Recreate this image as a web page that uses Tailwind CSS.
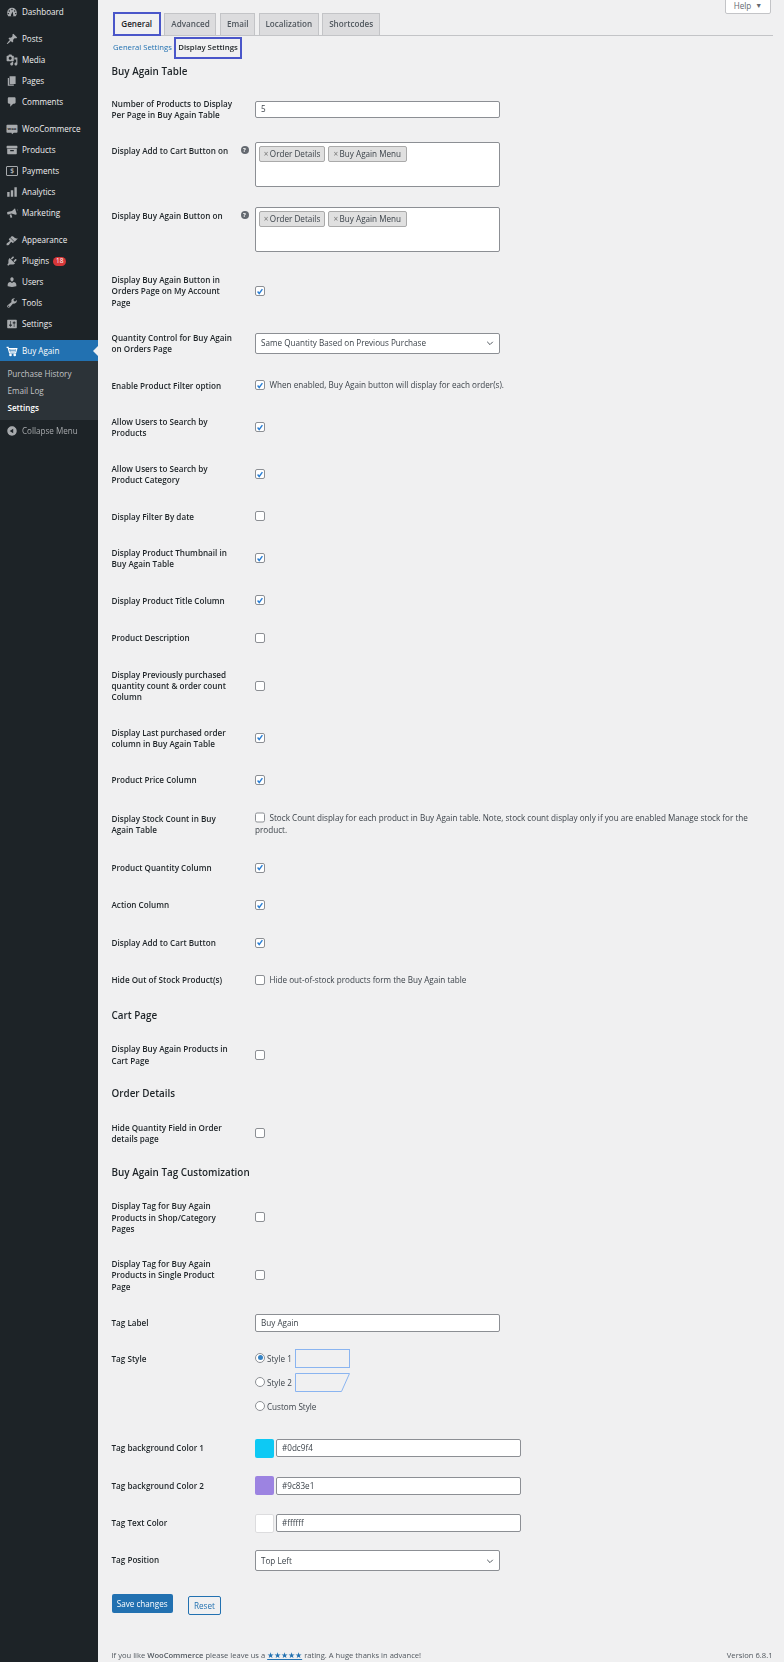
<!DOCTYPE html>
<html lang="en">
  <head>
    <meta charset="UTF-8" />
    <meta name="viewport" content="width=device-width, initial-scale=1.0" />
    <title>Buy Again Settings</title>
    <script src="https://cdn.jsdelivr.net/npm/@tailwindcss/browser@4"></script>
  </head>
  <body class="bg-[#f0f0f1]">
    <div class="relative flex h-[1662px] w-[784px] overflow-hidden font-['Open_Sans',sans-serif] text-[8.15px] text-[#3c434a] blur-[0.3px]">
      <!-- admin menu -->
      <aside class="w-[98px] shrink-0 bg-[#1d2327] pt-[1.3px] text-[8.1px] text-[#f0f0f1]">
        <nav class="flex flex-col">
          <a class="flex h-[20.9px] items-center gap-[4px] pl-[6px]"><svg class="size-[12px] fill-[#a7aaad]" viewBox="0 0 20 20"><path fill-rule="evenodd" d="M3.76 17h12.48A8 8 0 0 0 18 11 8 8 0 1 0 2 11a8 8 0 0 0 1.76 6zM10 4.5a1.2 1.2 0 1 1 0 2.4 1.2 1.2 0 0 1 0-2.4zM5.5 7a1.2 1.2 0 1 1 0 2.4A1.2 1.2 0 0 1 5.5 7zm9 0a1.2 1.2 0 1 1 0 2.4 1.2 1.2 0 0 1 0-2.4zM4 11.5a1.2 1.2 0 1 1 0 2.4 1.2 1.2 0 0 1 0-2.4zm12 0a1.2 1.2 0 1 1 0 2.4 1.2 1.2 0 0 1 0-2.4zM11 9l1 5.5a2 2 0 1 1-3.6 0z"/></svg>Dashboard</a>
          <a class="mt-[6.4px] flex h-[20.9px] items-center gap-[4px] pl-[6px]"><svg class="size-[12px] fill-[#a7aaad]" viewBox="0 0 20 20"><path d="M10.44 3.02l1.82-1.82 6.36 6.35-1.83 1.82c-1.05-.68-2.48-.57-3.41.36l-.75.75c-.92.93-1.04 2.35-.35 3.41l-1.83 1.82-2.41-2.41-2.8 2.79c-.42.42-3.38 2.71-3.8 2.29s1.86-3.39 2.28-3.81l2.79-2.79L4.1 9.36l1.83-1.82c1.05.69 2.48.57 3.4-.36l.75-.75c.93-.92 1.05-2.35.36-3.41z"/></svg>Posts</a>
          <a class="flex h-[20.9px] items-center gap-[4px] pl-[6px]"><svg class="size-[12px] fill-[#a7aaad]" viewBox="0 0 20 20"><path d="M13 11V4c0-.55-.45-1-1-1h-1.67L9 1H5L3.67 3H2c-.55 0-1 .45-1 1v7c0 .55.45 1 1 1h10c.55 0 1-.45 1-1zM7 4.5c1.38 0 2.5 1.12 2.5 2.5S8.38 9.5 7 9.5 4.5 8.38 4.5 7 5.62 4.5 7 4.5zM14 6h5v10.5c0 1.38-1.12 2.5-2.5 2.5S14 17.88 14 16.5s1.12-2.5 2.5-2.5c.17 0 .34.02.5.05V9h-3V6zm-4 8.05V13h2v3.5c0 1.38-1.12 2.5-2.5 2.5S7 17.88 7 16.5 8.12 14 9.5 14c.17 0 .34.02.5.05z"/></svg>Media</a>
          <a class="flex h-[20.9px] items-center gap-[4px] pl-[6px]"><svg class="size-[12px] fill-[#a7aaad]" viewBox="0 0 20 20"><path d="M6 15V2h10v13H6zm-1 1h8v2H3V5h2v11z"/></svg>Pages</a>
          <a class="flex h-[20.9px] items-center gap-[4px] pl-[6px]"><svg class="size-[12px] fill-[#a7aaad]" viewBox="0 0 20 20"><path d="M5 2h9c1.1 0 2 .9 2 2v7c0 1.1-.9 2-2 2h-2l-5 5v-5H5c-1.1 0-2-.9-2-2V4c0-1.1.9-2 2-2z"/></svg>Comments</a>
          <a class="mt-[6.9px] flex h-[20.9px] items-center gap-[4px] pl-[6px]"><svg class="size-[12px] fill-[#a7aaad]" viewBox="0 0 20 20"><path d="M2 3h16c.8 0 1.2.5 1.2 1.200v11c0 .7-.5 1.200-1.200 1.200h-5l-3 2.300-.8-2.300H2c-.7 0-1.200-.5-1.200-1.200v-11C.8 3.500 1.300 3 2 3z"/><text x="10" y="12" text-anchor="middle" font-size="7" font-weight="700" fill="#1d2327">woo</text></svg>WooCommerce</a>
          <a class="flex h-[20.9px] items-center gap-[4px] pl-[6px]"><svg class="size-[12px] fill-[#a7aaad]" viewBox="0 0 20 20"><path d="M19 4v3H1V4c0-.55.45-1 1-1h16c.55 0 1 .45 1 1zM2 8h16v8c0 .55-.45 1-1 1H3c-.55 0-1-.45-1-1V8zm5 2v2h6v-2H7z"/></svg>Products</a>
          <a class="flex h-[20.9px] items-center gap-[4px] pl-[6px]"><span class="flex h-[10px] w-[12px] items-center justify-center rounded-[1px] border border-[#a7aaad] text-[6.5px] leading-none font-bold text-[#a7aaad]">$</span>Payments</a>
          <a class="flex h-[20.9px] items-center gap-[4px] pl-[6px]"><svg class="size-[12px] fill-[#a7aaad]" viewBox="0 0 20 20"><path d="M18 18V2h-4v16h4zm-6 0V7H8v11h4zm-6 0v-8H2v8h4z"/></svg>Analytics</a>
          <a class="flex h-[20.9px] items-center gap-[4px] pl-[6px]"><svg class="size-[12px] fill-[#a7aaad]" viewBox="0 0 20 20"><path d="M15 2l3 10-2 .8-7-1.800-5 1.500-2-.5v-3.500l2-.7 6-1.300zM18.500 5l1.300-.8.2 1-1.200.6zM6 13l2.800-.8 1.700 5-2.700 1z"/></svg>Marketing</a>
          <a class="mt-[6.6px] flex h-[20.9px] items-center gap-[4px] pl-[6px]"><svg class="size-[12px] fill-[#a7aaad]" viewBox="0 0 20 20"><path d="M14.480 11.060L7.410 3.990l1.500-1.500c.5-.56 2.300-.47 3.510.32 1.210.8 1.430 1.280 2.910 2.100 1.180.64 2.450 1.260 4.450.85zm-.71.71L6.700 4.700 4.930 6.470c-.39.39-.39 1.020 0 1.410l1.060 1.060c.39.39.39 1.030 0 1.420-.6.6-1.430 1.110-2.210 1.690-.35.26-.7.53-1.010.84C1.430 13.230.4 14.700 1.100 16.900c2.200.7 3.670-.33 4.530-1.670.31-.31.58-.66.84-1.010.58-.78 1.090-1.610 1.690-2.210.39-.39 1.030-.39 1.420 0l1.060 1.060c.39.39 1.020.39 1.410 0z"/></svg>Appearance</a>
          <a class="flex h-[20.9px] items-center gap-[4px] pl-[6px]"><svg class="size-[12px] fill-[#a7aaad]" viewBox="0 0 20 20"><path d="M13.110 4.360L9.870 7.600 8 5.730l3.240-3.240c.35-.34 1.050-.2 1.560.32.52.51.66 1.210.31 1.550zm-8 1.770l.91-1.120 9.010 9.010-1.190.84c-.71.71-2.630 1.160-3.820 1.160H6.140L4.900 17.260c-.59.59-1.540.59-2.120 0-.59-.58-.59-1.530 0-2.120l1.240-1.240v-3.880c0-1.130.4-3.190 1.090-3.890zm7.260 3.970l3.240-3.240c.34-.35 1.040-.21 1.550.31.52.51.66 1.210.31 1.550l-3.240 3.250z"/></svg>Plugins<span class="flex h-[9.500px] w-[13px] items-center justify-center rounded-full bg-[#d63638] text-[6.500px] leading-none text-white">18</span></a>
          <a class="flex h-[20.9px] items-center gap-[4px] pl-[6px]"><svg class="size-[12px] fill-[#a7aaad]" viewBox="0 0 20 20"><path d="M10 9.250c-2.270 0-2.730-3.440-2.730-3.440C7 4.020 7.820 2 9.970 2c2.160 0 2.980 2.020 2.710 3.810 0 0-.41 3.440-2.680 3.440zm0 2.570L12.720 10c2.390 0 4.520 2.330 4.520 4.530v2.490s-3.650 1.130-7.240 1.130c-3.650 0-7.240-1.130-7.240-1.130v-2.490c0-2.250 1.940-4.480 4.470-4.480z"/></svg>Users</a>
          <a class="flex h-[20.9px] items-center gap-[4px] pl-[6px]"><svg class="size-[12px] fill-[#a7aaad]" viewBox="0 0 20 20"><path d="M16.680 9.770c-1.340 1.340-3.300 1.670-4.950.99l-5.410 6.520c-.99.99-2.590.99-3.580 0s-.99-2.590 0-3.570l6.520-5.420c-.68-1.650-.35-3.610.99-4.950 1.280-1.280 3.120-1.620 4.720-1.060l-2.890 2.890 2.820 2.820 2.860-2.870c.53 1.580.18 3.390-1.080 4.650zM3.810 16.210c.4.39 1.040.39 1.430 0 .4-.4.4-1.040 0-1.430-.39-.4-1.030-.4-1.430 0-.39.39-.39 1.030 0 1.430z"/></svg>Tools</a>
          <a class="flex h-[20.9px] items-center gap-[4px] pl-[6px]"><svg class="size-[12px] fill-[#a7aaad]" viewBox="0 0 20 20"><path d="M18 16V4c0-.55-.45-1-1-1H3c-.55 0-1 .45-1 1v12c0 .55.45 1 1 1h14c.55 0 1-.45 1-1zM8 11h1c.55 0 1 .45 1 1s-.45 1-1 1H8v1.500c0 .28-.22.5-.5.5s-.5-.22-.5-.5V13H6c-.55 0-1-.45-1-1s.45-1 1-1h1V5.500c0-.28.22-.5.5-.5s.5.22.5.5V11zm5-2h-1c-.55 0-1-.45-1-1s.45-1 1-1h1V5.500c0-.28.22-.5.5-.5s.5.22.5.5V7h1c.55 0 1 .45 1 1s-.45 1-1 1h-1v5.500c0 .28-.22.5-.5.5s-.5-.22-.5-.5V9z"/></svg>Settings</a>
          <a class="relative mt-[5.700px] flex h-[21px] items-center gap-[4px] bg-[#2271b1] pl-[6px] text-white"><svg class="size-[12px] fill-none stroke-white stroke-2" viewBox="0 0 20 20"><path d="M1 4h2.500l2.500 9h10l2-7H5"/><path d="M7 8h9M7 10.500h8" stroke-width="1.500"/><circle cx="7.500" cy="16.500" r="1.200" fill="#fff"/><circle cx="14.500" cy="16.500" r="1.200" fill="#fff"/></svg>Buy Again<span class="absolute top-[5.500px] right-0 size-0 border-y-[5px] border-r-[5px] border-y-transparent border-r-[#f0f0f1]"></span></a>
          <div class="flex h-[59px] flex-col justify-center gap-[5.800px] bg-[#2c3338] pl-[7.500px] text-[#c3c4c7]">
            <a class="leading-[11.300px]">Purchase History</a>
            <a class="leading-[11.300px]">Email Log</a>
            <a class="leading-[11.300px] font-semibold text-white">Settings</a>
          </div>
          <a class="flex h-[21.500px] items-center gap-[4px] pl-[6px] text-[#a7aaad]"><svg class="size-[12px] fill-[#a7aaad]" viewBox="0 0 20 20"><path d="M10 2.160c4.330 0 7.840 3.510 7.840 7.840s-3.510 7.840-7.840 7.840S2.160 14.330 2.160 10 5.710 2.160 10 2.160zm2 11.720V6.120L6.180 9.970z"/></svg>Collapse Menu</a>
        </nav>
      </aside>

      <main class="flex w-[686px] flex-col pl-[13.500px]">
        <!-- tabs -->
        <div class="mt-[12px] flex h-[23.500px] w-[661px] items-end gap-[3.800px] border-b border-[#c3c4c7] pl-[1.200px]">
          <a class="flex h-[24px] w-[48px] translate-y-[1px] items-center justify-center border-2 border-[#4a56c9] bg-[#f0f0f1] pt-[1px] font-semibold text-[#1d2327]">General</a>
          <a class="flex h-[22px] w-[52px] items-center justify-center border border-b-0 border-[#c3c4c7] bg-[#dcdcde] pt-[1px] font-semibold text-[#50575e]">Advanced</a>
          <a class="flex h-[22px] w-[35px] items-center justify-center border border-b-0 border-[#c3c4c7] bg-[#dcdcde] pt-[1px] font-semibold text-[#50575e]">Email</a>
          <a class="flex h-[22px] w-[59.500px] items-center justify-center border border-b-0 border-[#c3c4c7] bg-[#dcdcde] pt-[1px] font-semibold text-[#50575e]">Localization</a>
          <a class="flex h-[22px] w-[57.500px] items-center justify-center border border-b-0 border-[#c3c4c7] bg-[#dcdcde] pt-[1px] font-semibold text-[#50575e]">Shortcodes</a>
        </div>
        <!-- sub tabs -->
        <div class="mt-[1.500px] flex h-[22px] items-center pl-[1.500px]">
          <a class="w-[59px] text-[7.700px] whitespace-nowrap text-[#2271b1]">General Settings</a>
          <span class="w-[2px] text-[#a7aaad]">|</span>
          <a class="flex h-[22px] w-[68px] items-center justify-center border-2 border-[#4a56c9] text-[7.800px] font-semibold text-[#1d2327]">Display Settings</a>
        </div>
        <h2 class="mt-[5px] text-[9.900px] leading-[15px] font-semibold text-[#1d2327]">Buy Again Table</h2>

        <div class="mt-[7px] flex flex-col">
          <div class="flex min-h-[37.500px] items-center">
            <div class="w-[143.500px] py-[12.150px]"><p class="w-[124px] leading-[11.200px] font-semibold text-[#1d2327]">Number of Products to Display Per Page in Buy Again Table</p></div>
            <div class="flex h-[17px] w-[245px] items-center rounded-[2px] border border-[#8c8f94] bg-white px-[5px]">5</div>
          </div>
          <div class="flex h-[64.700px] items-start pt-[9.200px]">
            <div class="flex w-[143.500px] items-center pt-[3px]"><p class="w-[129px] leading-[11.200px] font-semibold text-[#1d2327]">Display Add to Cart Button on</p><span class="flex size-[8px] items-center justify-center rounded-full bg-[#646970] text-[6px] leading-none font-bold text-white">?</span></div>
            <div class="flex h-[45px] w-[245px] items-start gap-[3px] rounded-[2px] border border-[#8c8f94] bg-white p-[3px]">
              <span class="flex h-[16.500px] w-[66px] items-center justify-center rounded-[2px] border border-[#aaaaaa] bg-[#e0e0e0]"><span class="mr-[1.500px] text-[#777777]">×</span>Order Details</span>
              <span class="flex h-[16.500px] w-[78.500px] items-center justify-center rounded-[2px] border border-[#aaaaaa] bg-[#e0e0e0]"><span class="mr-[1.500px] text-[#777777]">×</span>Buy Again Menu</span>
            </div>
          </div>
          <div class="flex h-[64.700px] items-start pt-[9.200px]">
            <div class="flex w-[143.500px] items-center pt-[3px]"><p class="w-[129px] leading-[11.200px] font-semibold text-[#1d2327]">Display Buy Again Button on</p><span class="flex size-[8px] items-center justify-center rounded-full bg-[#646970] text-[6px] leading-none font-bold text-white">?</span></div>
            <div class="flex h-[45px] w-[245px] items-start gap-[3px] rounded-[2px] border border-[#8c8f94] bg-white p-[3px]">
              <span class="flex h-[16.500px] w-[66px] items-center justify-center rounded-[2px] border border-[#aaaaaa] bg-[#e0e0e0]"><span class="mr-[1.500px] text-[#777777]">×</span>Order Details</span>
              <span class="flex h-[16.500px] w-[78.500px] items-center justify-center rounded-[2px] border border-[#aaaaaa] bg-[#e0e0e0]"><span class="mr-[1.500px] text-[#777777]">×</span>Buy Again Menu</span>
            </div>
          </div>
          <div class="flex min-h-[37.500px] items-center">
            <div class="w-[143.500px] py-[12.150px]"><p class="w-[124px] leading-[11.200px] font-semibold text-[#1d2327]">Display Buy Again Button in Orders Page on My Account Page</p></div>
            <span class="flex size-[10px] items-center justify-center rounded-[2px] border border-[#8c8f94] bg-white"><svg class="size-[9px] fill-none stroke-[#2b7fd4] stroke-[3.500]" viewBox="0 0 20 20"><path d="M4 10l4 5 8-11"/></svg></span>
          </div>
          <div class="flex min-h-[37.500px] items-center">
            <div class="w-[143.500px] py-[12.150px]"><p class="w-[124px] leading-[11.200px] font-semibold text-[#1d2327]">Quantity Control for Buy Again on Orders Page</p></div>
            <div class="flex h-[20.500px] w-[245px] items-center justify-between rounded-[2px] border border-[#8c8f94] bg-white px-[5px]">Same Quantity Based on Previous Purchase<svg class="size-[8px] fill-none stroke-[#50575e] stroke-[2.500]" viewBox="0 0 20 20"><path d="M3 7l7 7 7-7"/></svg></div>
          </div>
          <div class="flex min-h-[37.500px] items-center">
            <div class="w-[143.500px] py-[12.150px]"><p class="w-[124px] leading-[11.200px] font-semibold text-[#1d2327]">Enable Product Filter option</p></div>
            <span class="flex size-[10px] items-center justify-center rounded-[2px] border border-[#8c8f94] bg-white"><svg class="size-[9px] fill-none stroke-[#2b7fd4] stroke-[3.500]" viewBox="0 0 20 20"><path d="M4 10l4 5 8-11"/></svg></span>
            <span class="ml-[4.500px]">When enabled, Buy Again button will display for each order(s).</span>
          </div>
          <div class="flex min-h-[37.500px] items-center">
            <div class="w-[143.500px] py-[12.150px]"><p class="w-[124px] leading-[11.200px] font-semibold text-[#1d2327]">Allow Users to Search by Products</p></div>
            <span class="flex size-[10px] items-center justify-center rounded-[2px] border border-[#8c8f94] bg-white"><svg class="size-[9px] fill-none stroke-[#2b7fd4] stroke-[3.500]" viewBox="0 0 20 20"><path d="M4 10l4 5 8-11"/></svg></span>
          </div>
          <div class="flex min-h-[37.500px] items-center">
            <div class="w-[143.500px] py-[12.150px]"><p class="w-[124px] leading-[11.200px] font-semibold text-[#1d2327]">Allow Users to Search by Product Category</p></div>
            <span class="flex size-[10px] items-center justify-center rounded-[2px] border border-[#8c8f94] bg-white"><svg class="size-[9px] fill-none stroke-[#2b7fd4] stroke-[3.500]" viewBox="0 0 20 20"><path d="M4 10l4 5 8-11"/></svg></span>
          </div>
          <div class="flex min-h-[37.500px] items-center">
            <div class="w-[143.500px] py-[12.150px]"><p class="w-[124px] leading-[11.200px] font-semibold text-[#1d2327]">Display Filter By date</p></div>
            <span class="size-[10px] rounded-[2px] border border-[#8c8f94] bg-white"></span>
          </div>
          <div class="flex min-h-[37.500px] items-center">
            <div class="w-[143.500px] py-[12.150px]"><p class="w-[124px] leading-[11.200px] font-semibold text-[#1d2327]">Display Product Thumbnail in Buy Again Table</p></div>
            <span class="flex size-[10px] items-center justify-center rounded-[2px] border border-[#8c8f94] bg-white"><svg class="size-[9px] fill-none stroke-[#2b7fd4] stroke-[3.500]" viewBox="0 0 20 20"><path d="M4 10l4 5 8-11"/></svg></span>
          </div>
          <div class="flex min-h-[37.500px] items-center">
            <div class="w-[143.500px] py-[12.150px]"><p class="w-[124px] leading-[11.200px] font-semibold text-[#1d2327]">Display Product Title Column</p></div>
            <span class="flex size-[10px] items-center justify-center rounded-[2px] border border-[#8c8f94] bg-white"><svg class="size-[9px] fill-none stroke-[#2b7fd4] stroke-[3.500]" viewBox="0 0 20 20"><path d="M4 10l4 5 8-11"/></svg></span>
          </div>
          <div class="flex min-h-[37.500px] items-center">
            <div class="w-[143.500px] py-[12.150px]"><p class="w-[124px] leading-[11.200px] font-semibold text-[#1d2327]">Product Description</p></div>
            <span class="size-[10px] rounded-[2px] border border-[#8c8f94] bg-white"></span>
          </div>
          <div class="flex min-h-[37.500px] items-center">
            <div class="w-[143.500px] py-[12.150px]"><p class="w-[124px] leading-[11.200px] font-semibold text-[#1d2327]">Display Previously purchased quantity count &amp; order count Column</p></div>
            <span class="size-[10px] rounded-[2px] border border-[#8c8f94] bg-white"></span>
          </div>
          <div class="flex min-h-[37.500px] items-center">
            <div class="w-[143.500px] py-[12.150px]"><p class="w-[124px] leading-[11.200px] font-semibold text-[#1d2327]">Display Last purchased order column in Buy Again Table</p></div>
            <span class="flex size-[10px] items-center justify-center rounded-[2px] border border-[#8c8f94] bg-white"><svg class="size-[9px] fill-none stroke-[#2b7fd4] stroke-[3.500]" viewBox="0 0 20 20"><path d="M4 10l4 5 8-11"/></svg></span>
          </div>
          <div class="flex min-h-[37.500px] items-center">
            <div class="w-[143.500px] py-[12.150px]"><p class="w-[124px] leading-[11.200px] font-semibold text-[#1d2327]">Product Price Column</p></div>
            <span class="flex size-[10px] items-center justify-center rounded-[2px] border border-[#8c8f94] bg-white"><svg class="size-[9px] fill-none stroke-[#2b7fd4] stroke-[3.500]" viewBox="0 0 20 20"><path d="M4 10l4 5 8-11"/></svg></span>
          </div>
          <div class="flex min-h-[50px] items-center">
            <div class="w-[143.500px] shrink-0 py-[12.150px]"><p class="w-[124px] leading-[11.200px] font-semibold text-[#1d2327]">Display Stock Count in Buy Again Table</p></div>
            <p class="w-[517px] leading-[12px]"><span class="mr-[4.500px] inline-block size-[10px] translate-y-[1.500px] rounded-[2px] border border-[#8c8f94] bg-white"></span>Stock Count display for each product in Buy Again table. Note, stock count display only if you are enabled Manage stock for the product.</p>
          </div>
          <div class="flex min-h-[37.500px] items-center">
            <div class="w-[143.500px] py-[12.150px]"><p class="w-[124px] leading-[11.200px] font-semibold text-[#1d2327]">Product Quantity Column</p></div>
            <span class="flex size-[10px] items-center justify-center rounded-[2px] border border-[#8c8f94] bg-white"><svg class="size-[9px] fill-none stroke-[#2b7fd4] stroke-[3.500]" viewBox="0 0 20 20"><path d="M4 10l4 5 8-11"/></svg></span>
          </div>
          <div class="flex min-h-[37.500px] items-center">
            <div class="w-[143.500px] py-[12.150px]"><p class="w-[124px] leading-[11.200px] font-semibold text-[#1d2327]">Action Column</p></div>
            <span class="flex size-[10px] items-center justify-center rounded-[2px] border border-[#8c8f94] bg-white"><svg class="size-[9px] fill-none stroke-[#2b7fd4] stroke-[3.500]" viewBox="0 0 20 20"><path d="M4 10l4 5 8-11"/></svg></span>
          </div>
          <div class="flex min-h-[37.500px] items-center">
            <div class="w-[143.500px] py-[12.150px]"><p class="w-[124px] leading-[11.200px] font-semibold text-[#1d2327]">Display Add to Cart Button</p></div>
            <span class="flex size-[10px] items-center justify-center rounded-[2px] border border-[#8c8f94] bg-white"><svg class="size-[9px] fill-none stroke-[#2b7fd4] stroke-[3.500]" viewBox="0 0 20 20"><path d="M4 10l4 5 8-11"/></svg></span>
          </div>
          <div class="flex min-h-[37.500px] items-center">
            <div class="w-[143.500px] py-[12.150px]"><p class="w-[124px] leading-[11.200px] font-semibold text-[#1d2327]">Hide Out of Stock Product(s)</p></div>
            <span class="size-[10px] rounded-[2px] border border-[#8c8f94] bg-white"></span>
            <span class="ml-[4.500px]">Hide out-of-stock products form the Buy Again table</span>
          </div>
        </div>

        <h2 class="flex h-[32.500px] items-center text-[9.900px] font-semibold text-[#1d2327]">Cart Page</h2>
        <div class="flex min-h-[37.500px] items-center">
          <div class="w-[143.500px] py-[12.150px]"><p class="w-[124px] leading-[11.200px] font-semibold text-[#1d2327]">Display Buy Again Products in Cart Page</p></div>
          <span class="size-[10px] rounded-[2px] border border-[#8c8f94] bg-white"></span>
        </div>

        <h2 class="flex h-[31.500px] items-center text-[9.900px] font-semibold text-[#1d2327]">Order Details</h2>
        <div class="flex min-h-[37.500px] items-center">
          <div class="w-[143.500px] py-[12.150px]"><p class="w-[124px] leading-[11.200px] font-semibold text-[#1d2327]">Hide Quantity Field in Order details page</p></div>
          <span class="size-[10px] rounded-[2px] border border-[#8c8f94] bg-white"></span>
        </div>

        <h2 class="flex h-[32px] items-center text-[9.900px] font-semibold text-[#1d2327]">Buy Again Tag Customization</h2>
        <div class="flex min-h-[37.500px] items-center">
          <div class="w-[143.500px] py-[12.150px]"><p class="w-[124px] leading-[11.200px] font-semibold text-[#1d2327]">Display Tag for Buy Again Products in Shop/Category Pages</p></div>
          <span class="size-[10px] rounded-[2px] border border-[#8c8f94] bg-white"></span>
        </div>
        <div class="flex min-h-[37.500px] items-center">
          <div class="w-[143.500px] py-[12.150px]"><p class="w-[124px] leading-[11.200px] font-semibold text-[#1d2327]">Display Tag for Buy Again Products in Single Product<br />Page</p></div>
          <span class="size-[10px] rounded-[2px] border border-[#8c8f94] bg-white"></span>
        </div>
        <div class="flex min-h-[37.500px] items-center">
          <div class="w-[143.500px] font-semibold text-[#1d2327]">Tag Label</div>
          <div class="flex h-[18px] w-[245px] items-center rounded-[2px] border border-[#8c8f94] bg-white px-[5px]">Buy Again</div>
        </div>
        <div class="flex h-[88px] items-start pt-[8px]">
          <div class="w-[143.500px] pt-[4px] font-semibold text-[#1d2327]">Tag Style</div>
          <div class="flex flex-col gap-[5px]">
            <div class="flex h-[19px] items-center">
              <span class="flex size-[10px] -translate-y-[1px] items-center justify-center rounded-full border border-[#8c8f94] bg-white"><span class="size-[5px] rounded-full bg-[#3582c4]"></span></span>
              <span class="ml-[2px] w-[28px]">Style 1</span>
              <span class="h-[19px] w-[55px] border border-[#8ab4f0]"></span>
            </div>
            <div class="flex h-[19px] items-center">
              <span class="size-[10px] -translate-y-[1px] rounded-full border border-[#8c8f94] bg-white"></span>
              <span class="ml-[2px] w-[28px]">Style 2</span>
              <svg class="h-[19px] w-[55px] fill-none stroke-[#8ab4f0]" viewBox="0 0 55 19"><path d="M.5.5h54l-8 18H.500z"/></svg>
            </div>
            <div class="flex h-[19px] items-center">
              <span class="size-[10px] -translate-y-[1px] rounded-full border border-[#8c8f94] bg-white"></span>
              <span class="ml-[2px]">Custom Style</span>
            </div>
          </div>
        </div>
        <div class="flex min-h-[37.500px] items-center">
          <div class="w-[143.500px] font-semibold text-[#1d2327]">Tag background Color 1</div>
          <span class="h-[19px] w-[19px] rounded-[2px] bg-[#0dc9f4]"></span>
          <div class="ml-[2px] flex h-[18px] w-[245px] items-center rounded-[2px] border border-[#8c8f94] bg-white px-[5px]">#0dc9f4</div>
        </div>
        <div class="flex min-h-[37.500px] items-center">
          <div class="w-[143.500px] font-semibold text-[#1d2327]">Tag background Color 2</div>
          <span class="h-[19px] w-[19px] rounded-[2px] bg-[#9c83e1]"></span>
          <div class="ml-[2px] flex h-[18px] w-[245px] items-center rounded-[2px] border border-[#8c8f94] bg-white px-[5px]">#9c83e1</div>
        </div>
        <div class="flex min-h-[37.500px] items-center">
          <div class="w-[143.500px] font-semibold text-[#1d2327]">Tag Text Color</div>
          <span class="h-[19px] w-[19px] rounded-[2px] border border-[#dcdcde] bg-white"></span>
          <div class="ml-[2px] flex h-[18px] w-[245px] items-center rounded-[2px] border border-[#8c8f94] bg-white px-[5px]">#ffffff</div>
        </div>
        <div class="flex min-h-[37.500px] items-center">
          <div class="w-[143.500px] -translate-y-[1px] font-semibold text-[#1d2327]">Tag Position</div>
          <div class="flex h-[20.500px] w-[245px] items-center justify-between rounded-[2px] border border-[#8c8f94] bg-white px-[5px]">Top Left<svg class="size-[8px] fill-none stroke-[#50575e] stroke-[2.500]" viewBox="0 0 20 20"><path d="M3 7l7 7 7-7"/></svg></div>
        </div>
        <div class="mt-[15px] flex items-start gap-[15px]">
          <button class="flex h-[18.800px] w-[61.500px] items-center justify-center rounded-[2px] bg-[#2271b1] text-white">Save changes</button>
          <button class="mt-[2px] flex h-[18.800px] w-[33px] items-center justify-center rounded-[2px] border border-[#2271b1] text-[#2271b1]">Reset</button>
        </div>
        <footer class="mt-[35px] flex w-[661px] items-center justify-between text-[7.600px] text-[#50575e]">
          <p>If you like <span class="font-semibold">WooCommerce</span> please leave us a <a class="text-[#2271b1] underline">★★★★★</a> rating. A huge thanks in advance!</p>
          <p>Version 6.8.1</p>
        </footer>
      </main>

      <!-- help tab sits over the top edge -->
      <button class="absolute top-[-1px] right-[13px] flex h-[15px] w-[46px] items-center justify-center gap-[4px] rounded-b-[2px] border border-[#c3c4c7] bg-white text-[#646970]">Help <span class="text-[7px]">▼</span></button>
    </div>
  </body>
</html>
